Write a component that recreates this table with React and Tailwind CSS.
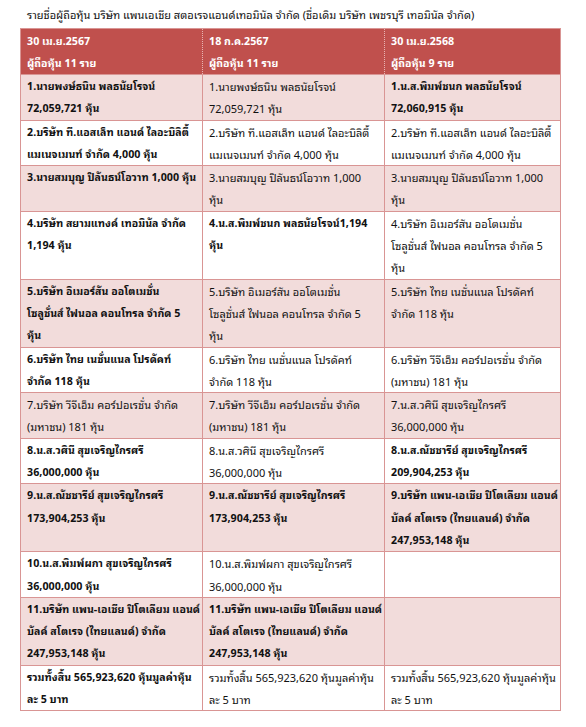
import React from "react";

const F = { fontFamily: "'Noto Sans Thai Looped', 'Noto Sans Thai', Tahoma, 'Noto Sans', sans-serif" };

const rows = [
  {
    pink: true,
    cells: [
      { b: true, l: ["1.นายพงษ์ธนิน พลธนัยโรจน์", "72,059,721 หุ้น"] },
      { b: false, l: ["1.นายพงษ์ธนิน พลธนัยโรจน์", "72,059,721 หุ้น"] },
      { b: true, l: ["1.น.ส.พิมพ์ชนก  พลธนัยโรจน์", "72,060,915 หุ้น"] },
    ],
  },
  {
    pink: false,
    cells: [
      { b: true, l: ["2.บริษัท ที.แอสเล็ท แอนด์ ไลอะบิลิตี้", "แมเนจเมนท์ จำกัด 4,000 หุ้น"] },
      { b: false, l: ["2.บริษัท ที.แอสเล็ท แอนด์ ไลอะบิลิตี้", "แมเนจเมนท์ จำกัด 4,000 หุ้น"] },
      { b: false, l: ["2.บริษัท ที.แอสเล็ท แอนด์ ไลอะบิลิตี้", "แมเนจเมนท์ จำกัด 4,000 หุ้น"] },
    ],
  },
  {
    pink: true,
    cells: [
      { b: true, l: ["3.นายสมบุญ ปิลันธน์โอวาท 1,000 หุ้น"] },
      { b: false, l: ["3.นายสมบุญ ปิลันธน์โอวาท 1,000", "หุ้น"] },
      { b: false, l: ["3.นายสมบุญ ปิลันธน์โอวาท 1,000", "หุ้น"] },
    ],
  },
  {
    pink: false,
    cells: [
      { b: true, l: ["4.บริษัท สยามแทงค์ เทอมินัล จำกัด", "1,194 หุ้น"] },
      { b: true, l: ["4.น.ส.พิมพ์ชนก  พลธนัยโรจน์1,194", "หุ้น"] },
      { b: false, l: ["4.บริษัท อิเมอร์สัน ออโตเมชั่น", "โซลูชั่นส์ ไฟนอล คอนโทรล จำกัด 5", "หุ้น"] },
    ],
  },
  {
    pink: true,
    cells: [
      { b: true, l: ["5.บริษัท อิเมอร์สัน ออโตเมชั่น", "โซลูชั่นส์ ไฟนอล คอนโทรล จำกัด 5", "หุ้น"] },
      { b: false, l: ["5.บริษัท อิเมอร์สัน ออโตเมชั่น", "โซลูชั่นส์ ไฟนอล คอนโทรล จำกัด 5", "หุ้น"] },
      { b: false, l: ["5.บริษัท ไทย เนชั่นแนล โปรดัคท์", "จำกัด 118 หุ้น"] },
    ],
  },
  {
    pink: false,
    cells: [
      { b: true, l: ["6.บริษัท ไทย เนชั่นแนล โปรดัคท์", "จำกัด 118 หุ้น"] },
      { b: false, l: ["6.บริษัท ไทย เนชั่นแนล โปรดัคท์", "จำกัด 118 หุ้น"] },
      { b: false, l: ["6.บริษัท วีจีเอ็ม คอร์ปอเรชั่น จำกัด", "(มหาชน) 181 หุ้น"] },
    ],
  },
  {
    pink: true,
    cells: [
      { b: false, l: ["7.บริษัท วีจีเอ็ม คอร์ปอเรชั่น จำกัด", "(มหาชน) 181 หุ้น"] },
      { b: false, l: ["7.บริษัท วีจีเอ็ม คอร์ปอเรชั่น จำกัด", "(มหาชน) 181 หุ้น"] },
      { b: false, l: ["7.น.ส.วศินี สุขเจริญไกรศรี", "36,000,000 หุ้น"] },
    ],
  },
  {
    pink: false,
    cells: [
      { b: true, l: ["8.น.ส.วศินี สุขเจริญไกรศรี", "36,000,000 หุ้น"] },
      { b: false, l: ["8.น.ส.วศินี สุขเจริญไกรศรี", "36,000,000 หุ้น"] },
      { b: true, l: ["8.น.ส.ณัชชารีย์ สุขเจริญไกรศรี", "209,904,253 หุ้น"] },
    ],
  },
  {
    pink: true,
    cells: [
      { b: true, l: ["9.น.ส.ณัชชารีย์ สุขเจริญไกรศรี", "173,904,253 หุ้น"] },
      { b: true, l: ["9.น.ส.ณัชชารีย์ สุขเจริญไกรศรี", "173,904,253 หุ้น"] },
      { b: true, l: ["9.บริษัท แพน-เอเชีย ปิโตเลียม แอนด์", "บัลค์ สโตเรจ (ไทยแลนด์) จำกัด", "247,953,148 หุ้น"] },
    ],
  },
  {
    pink: false,
    cells: [
      { b: true, l: ["10.น.ส.พิมพ์ผกา สุขเจริญไกรศรี", "36,000,000 หุ้น"] },
      { b: false, l: ["10.น.ส.พิมพ์ผกา สุขเจริญไกรศรี", "36,000,000 หุ้น"] },
      { b: false, l: [] },
    ],
  },
  {
    pink: true,
    cells: [
      { b: true, l: ["11.บริษัท แพน-เอเชีย ปิโตเลียม แอนด์", "บัลค์ สโตเรจ (ไทยแลนด์) จำกัด", "247,953,148 หุ้น"] },
      { b: true, l: ["11.บริษัท แพน-เอเชีย ปิโตเลียม แอนด์", "บัลค์ สโตเรจ (ไทยแลนด์) จำกัด", "247,953,148 หุ้น"] },
      { b: false, l: [] },
    ],
  },
  {
    pink: false,
    cells: [
      { b: true, l: ["รวมทั้งสิ้น 565,923,620 หุ้นมูลค่าหุ้น", "ละ 5 บาท"] },
      { b: false, l: ["รวมทั้งสิ้น 565,923,620 หุ้นมูลค่าหุ้น", "ละ 5 บาท"] },
      { b: false, l: ["รวมทั้งสิ้น 565,923,620 หุ้นมูลค่าหุ้น", "ละ 5 บาท"] },
    ],
  },
];

const headers = [
  ["30 เม.ย.2567", "ผู้ถือหุ้น 11  ราย"],
  ["18 ก.ค.2567", "ผู้ถือหุ้น 11  ราย"],
  ["30 เม.ย.2568", "ผู้ถือหุ้น 9  ราย"],
];

export default function App() {
  return (
    <div className="w-[586px] h-[727px] bg-white text-[#111]" style={F}>
      <div className="pt-[4px] pl-[27px] text-[11px] leading-[20px] whitespace-nowrap">
        รายชื่อผู้ถือหุ้น บริษัท แพนเอเชีย สตอเรจแอนด์เทอมินัล จำกัด (ชื่อเดิม บริษัท เพชรบุรี เทอมินัล จำกัด)
      </div>
      <div className="ml-[20px] mt-[4px] w-[541px] border border-[#d99594]">
        <div className="grid grid-cols-[181px_182px_1fr] bg-[#c0504d] text-white font-bold">
          {headers.map((h, i) => (
            <div
              key={i}
              className={`px-[6px] pt-px text-[10.6px] leading-[22px] whitespace-nowrap ${i > 0 ? "border-l border-dotted border-[#e8b4b2]" : ""}`}
            >
              <div>{h[0]}</div>
              <div>{h[1]}</div>
            </div>
          ))}
        </div>
        {rows.map((r, ri) => (
          <div
            key={ri}
            className={`grid grid-cols-[181px_182px_1fr] border-t border-[#d99594] ${r.pink ? "bg-[#f2dcdb]" : "bg-white"}`}
          >
            {r.cells.map((c, ci) => (
              <div
                key={ci}
                className={`px-[6px] leading-[22.3px] whitespace-nowrap ${ci > 0 ? "border-l border-[#d99594]" : ""} ${c.b ? "font-bold text-[10.6px]" : "font-normal text-[11px]"}`}
              >
                {c.l.map((t, ti) => (
                  <div key={ti}>{t}</div>
                ))}
              </div>
            ))}
          </div>
        ))}
      </div>
    </div>
  );
}
